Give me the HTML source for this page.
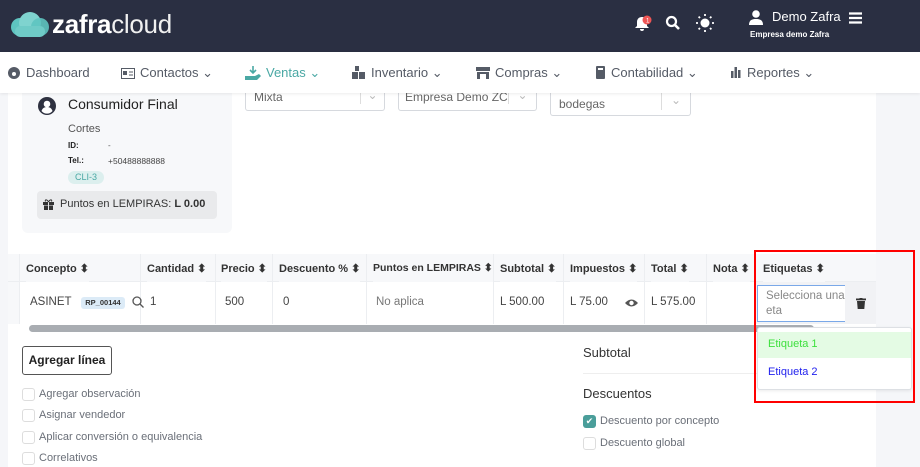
<!DOCTYPE html>
<html><head><meta charset="utf-8"><style>
*{box-sizing:border-box;margin:0;padding:0}
body{width:920px;height:467px;overflow:hidden;font-family:"Liberation Sans",sans-serif;background:#fff;position:relative;color:#3a3f4b}
.abs{position:absolute}
.hdr{left:0;top:0;width:920px;height:52px;background:#2a2f42}
.nav{left:0;top:52px;width:920px;height:41px;background:#fff;box-shadow:0 1px 3px rgba(0,0,0,.08);z-index:5}
.nav span{position:absolute;top:13px;font-size:13px;color:#555b66}
.rside{left:876px;top:93px;width:44px;height:374px;background:#f5f6f9}
.lside{left:0;top:93px;width:8px;height:374px;background:#f5f6f9}
.card{left:22px;top:85px;width:210px;height:148px;background:#f7f8fa;border-radius:6px}
.sel{border:1px solid #d6d9de;border-radius:3px;background:#fff;font-size:12px;color:#666}
.th{top:254px;height:28px;background:#f7f8fa;font-weight:bold;font-size:11px;color:#333;padding-top:8px;white-space:nowrap}
.td{top:282px;height:42px;font-size:11.5px;color:#444;padding-top:14px}
.cb{width:13px;height:13px;border:1px solid #ddd;border-radius:3px;background:#fff}
.lbl{font-size:11px;color:#6a6f78}
</style></head><body>
<div class="abs hdr"></div>
<svg class="abs" style="left:10px;top:12px" width="40" height="26"><circle cx="10" cy="15" r="9" fill="#5ec4c0"/><circle cx="20" cy="11" r="11" fill="#7fd3cf"/><circle cx="30" cy="15" r="9" fill="#5ec4c0" opacity=".9"/><rect x="5" y="14" width="30" height="11" rx="5" fill="#6fcbc7"/></svg>
<div class="abs" style="left:52px;top:9px;font-size:26px;color:#fff;letter-spacing:-0.3px"><b>zafra</b><span style="color:#f0f0f0">cloud</span></div>
<svg class="abs" style="left:634px;top:14px" width="20" height="20"><path d="M8 3c-3 0-5 2-5 5v4l-2 2h14l-2-2V8c0-3-2-5-5-5z M6 15a2 2 0 0 0 4 0z" fill="#fff"/><circle cx="13" cy="6" r="4.5" fill="#e55"/><text x="12" y="8.5" font-size="6" fill="#fff">1</text></svg>
<svg class="abs" style="left:665px;top:15px" width="16" height="16"><circle cx="6.5" cy="6.5" r="4.5" stroke="#fff" stroke-width="2.2" fill="none"/><path d="M10 10l4 4" stroke="#fff" stroke-width="2.6"/></svg>
<svg class="abs" style="left:696px;top:14px" width="18" height="18"><circle cx="9" cy="9" r="4.5" fill="#fff"/><g stroke="#fff" stroke-width="1.8"><path d="M9 0v2M9 16v2M0 9h2M16 9h2M2.6 2.6l1.4 1.4M14 14l1.4 1.4M2.6 15.4L4 14M14 4l1.4-1.4"/></g></svg>
<svg class="abs" style="left:749px;top:10px" width="14" height="15"><circle cx="7" cy="4" r="3.8" fill="#fff"/><path d="M0 15c0-5 3-6 7-6s7 1 7 6z" fill="#fff"/></svg>
<div class="abs" style="left:772px;top:9px;font-size:13px;color:#fff">Demo Zafra</div>
<svg class="abs" style="left:849px;top:12px" width="13" height="12"><path d="M0 1.5h13M0 6h13M0 10.5h13" stroke="#fff" stroke-width="2.2"/></svg>
<div class="abs" style="left:750px;top:30px;font-size:8px;color:#fff;font-weight:bold">Empresa demo Zafra</div>
<div class="abs nav">
<svg style="position:absolute;left:8px;top:15px" width="12" height="12"><circle cx="6" cy="6" r="6" fill="#555b66"/><circle cx="6" cy="7" r="2" fill="#fff"/></svg>
<span style="left:26px">Dashboard</span>
<svg style="position:absolute;left:121px;top:16px" width="14" height="11"><rect x=".5" y=".5" width="13" height="10" fill="none" stroke="#555b66"/><rect x="2" y="3" width="4" height="4" fill="#555b66"/><path d="M8 4h4M8 7h4" stroke="#555b66"/></svg>
<span style="left:140px">Contactos ⌄</span>
<svg style="position:absolute;left:245px;top:14px" width="16" height="14"><path d="M8 0v7M5 4l3 3 3-3" stroke="#4aa8a4" stroke-width="1.6" fill="none"/><path d="M0 10h10l4-2 2 2-4 4H0z" fill="#4aa8a4"/></svg>
<span style="left:266px;color:#4aa8a4">Ventas ⌄</span>
<svg style="position:absolute;left:352px;top:14px" width="14" height="14"><rect x="3" y="0" width="4" height="5" fill="#555b66"/><rect x="0" y="6" width="6" height="7" fill="#555b66"/><rect x="7" y="6" width="6" height="7" fill="#555b66"/></svg>
<span style="left:371px">Inventario ⌄</span>
<svg style="position:absolute;left:476px;top:15px" width="14" height="12"><rect x="0" y="0" width="14" height="4" fill="#555b66"/><rect x="1" y="5" width="12" height="7" fill="#555b66"/><rect x="4" y="7" width="6" height="5" fill="#fff"/></svg>
<span style="left:495px">Compras ⌄</span>
<svg style="position:absolute;left:596px;top:14px" width="9" height="13"><rect x="0" y="0" width="9" height="13" rx="1" fill="#555b66"/><rect x="2" y="2" width="5" height="2" fill="#fff"/></svg>
<span style="left:611px">Contabilidad ⌄</span>
<svg style="position:absolute;left:731px;top:15px" width="11" height="11"><rect x="0" y="4" width="2.5" height="7" fill="#555b66"/><rect x="3.5" y="0" width="2.5" height="11" fill="#555b66"/><rect x="7" y="3" width="2.5" height="8" fill="#555b66"/></svg>
<span style="left:747px">Reportes ⌄</span>
</div>
<div class="abs lside"></div>
<div class="abs rside"></div>
<div class="abs card"></div>
<svg class="abs" style="left:37px;top:96px" width="20" height="20"><circle cx="10" cy="10" r="9" fill="#2e3140"/><circle cx="10" cy="8" r="3.3" fill="#fff"/><path d="M4.5 15c1-3 3-4 5.5-4s4.5 1 5.5 4a7 7 0 0 1-11 0z" fill="#fff"/></svg>
<div class="abs" style="left:68px;top:96px;font-size:14px;color:#222">Consumidor Final</div>
<div class="abs" style="left:68px;top:123px;font-size:11px;color:#555">Cortes</div>
<div class="abs" style="left:68px;top:141px;font-size:8px;color:#222;font-weight:bold">ID:</div>
<div class="abs" style="left:108px;top:141px;font-size:8px;color:#555">-</div>
<div class="abs" style="left:68px;top:156px;font-size:8px;color:#222;font-weight:bold">Tel.:</div>
<div class="abs" style="left:108px;top:156px;font-size:8.5px;color:#444">+50488888888</div>
<div class="abs" style="left:68px;top:171px;width:36px;height:13px;border-radius:7px;background:#dcefee;color:#4aa8a4;font-size:9px;text-align:center;line-height:13px">CLI-3</div>
<div class="abs" style="left:37px;top:191px;width:180px;height:28px;border-radius:4px;background:#e9eaec"></div>
<svg class="abs" style="left:43px;top:199px" width="11" height="11"><rect x="0" y="3" width="11" height="3" fill="#333"/><rect x="1" y="6.5" width="9" height="4.5" fill="#333"/><rect x="5" y="3" width="1" height="8" fill="#e9eaec"/><path d="M5.5 3C4 0 1.5 0.5 2.5 2.5M5.5 3C7 0 9.5 0.5 8.5 2.5" stroke="#333" fill="none"/></svg>
<div class="abs" style="left:60px;top:198px;font-size:11px;color:#333">Puntos en LEMPIRAS: <b>L 0.00</b></div>
<div class="abs sel" style="left:245px;top:85px;width:140px;height:26px;padding:5px 8px;border-top:none">Mixta<span style="position:absolute;right:0;top:3px;width:24px;border-left:1px solid #ddd;height:16px;color:#bbb;text-align:center">⌄</span></div>
<div class="abs sel" style="left:398px;top:85px;width:139px;height:26px;padding:5px 6px;border-top:none;white-space:nowrap;overflow:hidden">Empresa Demo ZC<span style="position:absolute;right:0;top:3px;width:28px;border-left:1px solid #ddd;height:16px;color:#bbb;text-align:center;background:#fff">⌄</span></div>
<div class="abs sel" style="left:550px;top:85px;width:141px;height:31px;padding:12px 8px 0;border-top:none">bodegas<span style="position:absolute;right:0;top:3px;width:29px;border-left:1px solid #ddd;height:22px;color:#bbb;text-align:center;padding-top:5px">⌄</span></div>

<div class="abs th" style="left:8px;width:868px"></div>
<div class="abs" style="left:8px;top:282px;width:868px;height:42px;background:#fff"></div>
<div class="abs" style="left:8px;top:282px;width:11px;height:42px;background:#f7f8fa"></div>
<div class="abs" style="left:755px;top:282px;width:121px;height:42px;background:#f1f2f5"></div>
<div class="abs" style="left:19px;top:254px;width:1px;height:70px;background:#eceef1"></div>
<div class="abs" style="left:140px;top:254px;width:1px;height:70px;background:#eceef1"></div>
<div class="abs" style="left:215px;top:254px;width:1px;height:70px;background:#eceef1"></div>
<div class="abs" style="left:272px;top:254px;width:1px;height:70px;background:#eceef1"></div>
<div class="abs" style="left:366px;top:254px;width:1px;height:70px;background:#eceef1"></div>
<div class="abs" style="left:493px;top:254px;width:1px;height:70px;background:#eceef1"></div>
<div class="abs" style="left:563px;top:254px;width:1px;height:70px;background:#eceef1"></div>
<div class="abs" style="left:644px;top:254px;width:1px;height:70px;background:#eceef1"></div>
<div class="abs" style="left:706px;top:254px;width:1px;height:70px;background:#eceef1"></div>
<div class="abs" style="left:8px;top:281px;width:868px;height:1px;background:#eceef1"></div>
<div class="abs th" style="left:26px">Concepto ⬍</div>
<div class="abs th" style="left:147px">Cantidad ⬍</div>
<div class="abs th" style="left:221px">Precio ⬍</div>
<div class="abs th" style="left:279px">Descuento % ⬍</div>
<div class="abs th" style="left:373px;font-size:10.5px">Puntos en LEMPIRAS ⬍</div>
<div class="abs th" style="left:500px">Subtotal ⬍</div>
<div class="abs th" style="left:570px">Impuestos ⬍</div>
<div class="abs th" style="left:651px">Total ⬍</div>
<div class="abs th" style="left:713px">Nota ⬍</div>
<div class="abs th" style="left:763px">Etiquetas ⬍</div>
<div class="abs td" style="left:30px">ASINET</div>
<div class="abs" style="left:81px;top:297px;width:44px;height:12px;border-radius:3px;background:#dcebf7;font-size:7.5px;font-weight:bold;color:#333;text-align:center;line-height:12px">RP_00144</div>
<svg class="abs" style="left:132px;top:296px" width="12" height="12"><circle cx="5" cy="5" r="4" stroke="#555" stroke-width="1.3" fill="none"/><path d="M8 8l3.5 3.5" stroke="#555" stroke-width="1.3"/></svg>
<div class="abs td" style="left:150px">1</div>
<div class="abs td" style="left:225px">500</div>
<div class="abs td" style="left:283px">0</div>
<div class="abs td" style="left:376px;color:#777">No aplica</div>
<div class="abs td" style="left:500px">L 500.00</div>
<div class="abs td" style="left:570px">L 75.00</div>
<svg class="abs" style="left:625px;top:298px" width="13" height="10"><path d="M0 5Q6.5-2 13 5Q6.5 12 0 5z" fill="#555"/><circle cx="6.5" cy="5" r="2.2" fill="#fff"/></svg>
<div class="abs td" style="left:651px">L 575.00</div>
<div class="abs" style="left:757px;top:285px;width:88px;height:37px;background:#fff;border:1px solid #7aa8e8;border-right:none;font-size:11.5px;color:#888;padding:3px 0 0 8px;line-height:15px">Selecciona una<br>eta</div>
<svg class="abs" style="left:856px;top:298px" width="10" height="11"><rect x="0" y="0.5" width="10" height="1.8" fill="#333"/><rect x="3.5" y="0" width="3" height="1" fill="#333"/><path d="M1 3h8l-.7 8H1.7z" fill="#333"/></svg>
<div class="abs" style="left:29px;top:325px;width:785px;height:7px;border-radius:4px;background:#a9adb2"></div>
<div class="abs" style="left:22px;top:346px;width:90px;height:29px;border:1px solid #555;border-radius:3px;font-size:12px;font-weight:bold;color:#222;text-align:center;line-height:27px">Agregar línea</div>
<div class="abs cb" style="left:22px;top:388px"></div><div class="abs lbl" style="left:39px;top:388px">Agregar observación</div>
<div class="abs cb" style="left:22px;top:409px"></div><div class="abs lbl" style="left:39px;top:409px">Asignar vendedor</div>
<div class="abs cb" style="left:22px;top:431px"></div><div class="abs lbl" style="left:39px;top:431px">Aplicar conversión o equivalencia</div>
<div class="abs cb" style="left:22px;top:452px"></div><div class="abs lbl" style="left:39px;top:452px">Correlativos</div>
<div class="abs" style="left:583px;top:345px;font-size:13px;color:#333">Subtotal</div>
<div class="abs" style="left:583px;top:373px;width:176px;height:1px;background:#eee"></div>
<div class="abs" style="left:583px;top:386px;font-size:13px;color:#333">Descuentos</div>
<div class="abs" style="left:583px;top:415px;width:13px;height:13px;border-radius:3px;background:#4a9e9a;color:#fff;font-size:9px;text-align:center;line-height:13px">✔</div>
<div class="abs lbl" style="left:600px;top:415px">Descuento por concepto</div>
<div class="abs cb" style="left:583px;top:437px"></div><div class="abs lbl" style="left:600px;top:437px">Descuento global</div>
<div class="abs" style="left:757px;top:327px;width:155px;height:63px;background:#fff;border:1px solid #dde0e4;border-radius:3px;box-shadow:0 1px 3px rgba(0,0,0,.08)"></div>
<div class="abs" style="left:758px;top:332px;width:153px;height:26px;background:#e4fbe4"></div>
<div class="abs" style="left:768px;top:338px;font-size:11px;color:#3ee03e">Etiqueta 1</div>
<div class="abs" style="left:768px;top:366px;font-size:11px;color:#2222ee">Etiqueta 2</div>
<div class="abs" style="left:754px;top:250px;width:161px;height:153px;border:2px solid #f00"></div>
</body></html>
